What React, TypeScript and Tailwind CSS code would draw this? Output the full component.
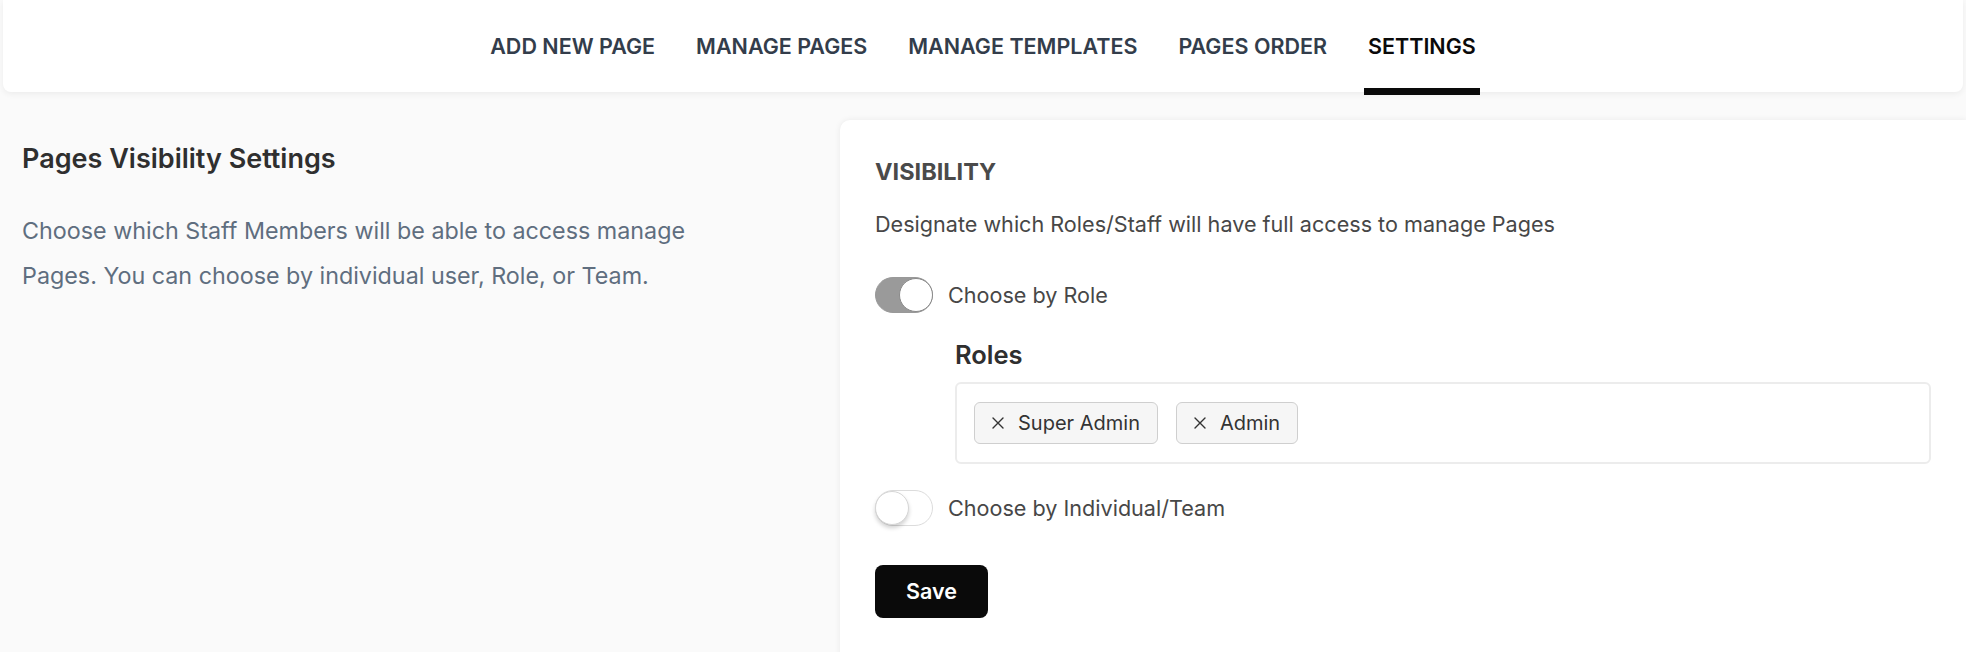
import { useState } from "react";

const TABS = ["ADD NEW PAGE", "MANAGE PAGES", "MANAGE TEMPLATES", "PAGES ORDER", "SETTINGS"];

function Toggle({ on, onChange }: { on: boolean; onChange: () => void }) {
  return (
    <button
      type="button"
      onClick={onChange}
      className={`relative h-[36px] w-[58px] shrink-0 rounded-full border ${
        on ? "border-[#999] bg-[#9a9a9a]" : "border-[#dcdcdc] bg-white"
      }`}
    >
      <span
        className={`absolute top-[0px] h-[34px] w-[34px] rounded-full border bg-white ${
          on
            ? "right-[-1px] border-[#8a8a8a]"
            : "left-[-1px] border-[#d6d6d6] shadow-[0_3px_4px_rgba(0,0,0,0.18)]"
        }`}
      />
    </button>
  );
}

function Chip({ label }: { label: string }) {
  return (
    <span className="flex h-[42px] items-center gap-[14px] rounded-[6px] border border-[#cfcfcf] bg-[#f6f6f6] px-[17px] text-[20px] text-[#333]">
      <svg width="12" height="12" viewBox="0 0 12 12" className="shrink-0">
        <path d="M1 1 L11 11 M11 1 L1 11" stroke="#333" strokeWidth="1.4" strokeLinecap="round" />
      </svg>
      {label}
    </span>
  );
}

export default function App() {
  const [byRole, setByRole] = useState(true);
  const [byTeam, setByTeam] = useState(false);

  return (
    <div className="min-h-screen bg-[#fafafa] font-['Inter',sans-serif]">
      {/* top tabs */}
      <header className="mx-[3px] flex h-[92px] justify-center gap-[41px] rounded-b-[8px] bg-white shadow-[0_2px_6px_rgba(0,0,0,0.06)]">
        {TABS.map((t) => {
          const active = t === "SETTINGS";
          return (
            <a
              key={t}
              className={`relative flex items-center text-[21.5px] font-semibold ${
                active ? "text-[#0a0a0a]" : "text-[#333d4b]"
              }`}
            >
              {t}
              {active && <span className="absolute -bottom-[3px] -left-[4px] -right-[4px] h-[7px] bg-[#0a0a0a]" />}
            </a>
          );
        })}
      </header>

      <main className="flex pt-[28px]">
        <section className="w-[840px] shrink-0 pl-[22px] pr-[110px] pt-[22px]">
          <h2 className="text-[27px] font-semibold leading-[34px] text-[#2f2f2f]">Pages Visibility Settings</h2>
          <p className="mt-[32px] text-[23.3px] leading-[45px] text-[#5f6e7f]">
            Choose which Staff Members will be able to access manage Pages. You can choose by individual user, Role, or
            Team.
          </p>
        </section>

        <section className="min-h-[540px] flex-1 rounded-tl-[10px] bg-white px-[35px] pt-[38px] shadow-[0_0_6px_rgba(0,0,0,0.07)]">
          <h3 className="text-[23.5px] font-bold leading-[28px] text-[#4a4a4a]">VISIBILITY</h3>
          <p className="mt-[24px] text-[21.6px] leading-[28px] text-[#474747]">
            Designate which Roles/Staff will have full access to manage Pages
          </p>

          <div className="mt-[39px] flex items-center gap-[15px]">
            <Toggle on={byRole} onChange={() => setByRole(!byRole)} />
            <span className="text-[21.6px] text-[#474747]">Choose by Role</span>
          </div>

          <div className="ml-[80px]">
            <h4 className="mt-[27px] text-[25.5px] font-semibold leading-[30px] text-[#2f2f2f]">Roles</h4>
            <div className="mt-[12px] flex gap-[18px] rounded-[6px] border-2 border-[#ececec] px-[17px] py-[18px]">
              <Chip label="Super Admin" />
              <Chip label="Admin" />
            </div>
          </div>

          <div className="mt-[26px] flex items-center gap-[15px]">
            <Toggle on={byTeam} onChange={() => setByTeam(!byTeam)} />
            <span className="text-[21.6px] text-[#474747]">Choose by Individual/Team</span>
          </div>

          <button
            type="button"
            className="mt-[39px] h-[53px] w-[113px] rounded-[8px] bg-[#0a0a0a] text-[21.5px] font-semibold text-white"
          >
            Save
          </button>
        </section>
      </main>
    </div>
  );
}
